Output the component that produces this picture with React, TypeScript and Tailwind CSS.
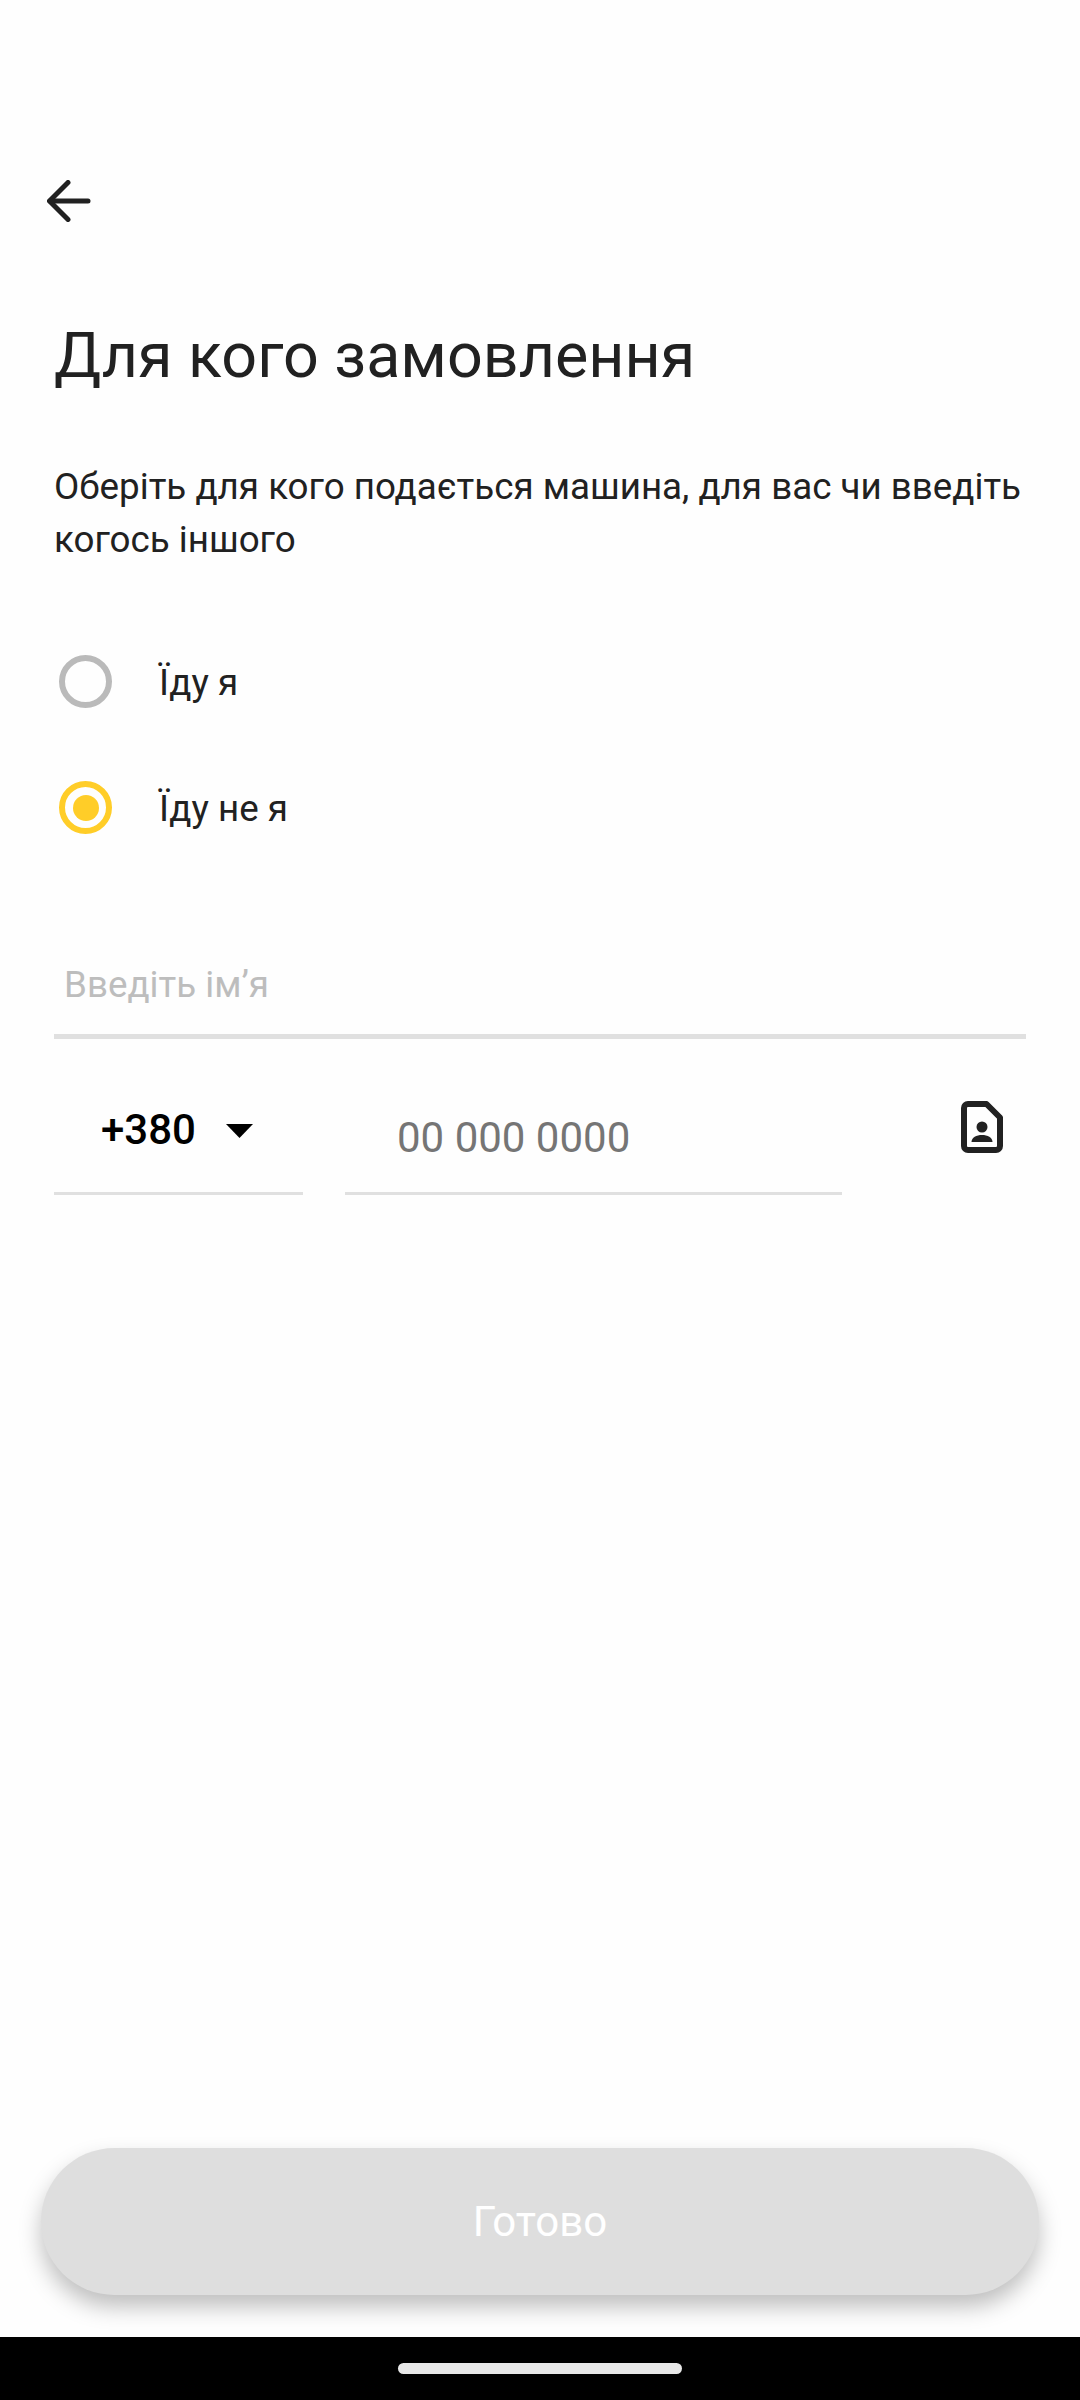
const RadioRow = ({ label, checked }: { label: string; checked?: boolean }) => (
  <div className="flex items-center h-[53px]">
    <div className="w-[105px] pl-[5px] shrink-0">
      <div
        className={`w-[53px] h-[53px] rounded-full border-[6px] flex items-center justify-center ${
          checked ? "border-[#ffcd28]" : "border-[#bababa]"
        }`}
      >
        {checked && <div className="w-[26px] h-[26px] rounded-full bg-[#ffcd28]" />}
      </div>
    </div>
    <p className="text-[36.75px] leading-[53px] text-[#212121] mt-[2px]">{label}</p>
  </div>
);

const App = () => {
  return (
    <div className="w-[1080px] h-[2400px] bg-[#fefefe] flex flex-col overflow-hidden font-['Roboto',sans-serif]">
      {/* --- Back arrow --- */}
      <div className="h-[180px] shrink-0" />
      <div className="pl-[47px] h-[42px] shrink-0">
        <svg width="44" height="42" viewBox="0 0 44 42" fill="none" stroke="#212121" strokeWidth="5" strokeLinecap="round" strokeLinejoin="round">
          <path d="M21 2.5 2.5 21 21 39.5" />
          <path d="M3 21h38" />
        </svg>
      </div>

      <div className="px-[54px] flex flex-col flex-1">
        {/* --- Title --- */}
        <h1 className="text-[62.8px] leading-[74px] text-[#212121] mt-[97px]">Для кого замовлення</h1>

        <p className="text-[36.75px] leading-[53px] text-[#212121] mt-[67px] w-[980px]">
          Оберіть для кого подається машина, для вас чи введіть когось іншого
        </p>

        {/* --- Radios --- */}
        <div className="flex flex-col gap-[73px] mt-[89px]">
          <RadioRow label="Їду я" />
          <RadioRow label="Їду не я" checked />
        </div>

        {/* --- Name field --- */}
        <div className="mt-[105px] h-[100px] border-b-[5px] border-[#e0e0e0] w-[972px] pl-[10px] pt-[24px]">
          <p className="text-[36.75px] leading-[44px] text-[#bdbdbd]">Введіть ім’я</p>
        </div>

        {/* --- Phone --- */}
        <div className="flex mt-[53px] w-[972px]">
          <div className="w-[249px] h-[103px] border-b-[3px] border-[#e0e0e0] flex pl-[47px] pt-[13px] shrink-0">
            <span className="text-[42px] leading-[50px] font-medium text-black">+380</span>
            <svg className="ml-[30px] mt-[19px]" width="27" height="14" viewBox="0 0 27 14">
              <path d="M0 0h27L13.5 14z" fill="#000" />
            </svg>
          </div>
          <div className="w-[497px] h-[103px] ml-[42px] border-b-[3px] border-[#e0e0e0] pl-[52px] pt-[21px] shrink-0">
            <span className="text-[42px] leading-[50px] text-[#757575]">00 000 0000</span>
          </div>
          <svg className="ml-[119px] mt-[9px] shrink-0" width="42" height="52" viewBox="0 0 42 52" fill="none">
            <path d="M7 3h18.5L39 16.5V45a4 4 0 0 1-4 4H7a4 4 0 0 1-4-4V7a4 4 0 0 1 4-4z" stroke="#212121" strokeWidth="6" strokeLinejoin="round" />
            <circle cx="21" cy="26" r="5.5" fill="#212121" />
            <path d="M10.5 41c0-4.5 5-7 10.5-7s10.5 2.5 10.5 7z" fill="#212121" />
          </svg>
        </div>
      </div>

      {/* --- Done button --- */}
      <div className="px-[41px] pb-[42px] shrink-0">
        <div className="h-[147px] rounded-full bg-[#dedede] shadow-[0_12px_22px_rgba(0,0,0,0.25)] flex items-center justify-center">
          <span className="text-[42px] leading-[48px] text-white">Готово</span>
        </div>
      </div>

      {/* --- Nav bar --- */}
      <div className="h-[63px] bg-black flex justify-center pt-[26px] shrink-0">
        <div className="w-[284px] h-[11px] rounded-full bg-[#e8e8e8]" />
      </div>
    </div>
  );
};

export default App;
